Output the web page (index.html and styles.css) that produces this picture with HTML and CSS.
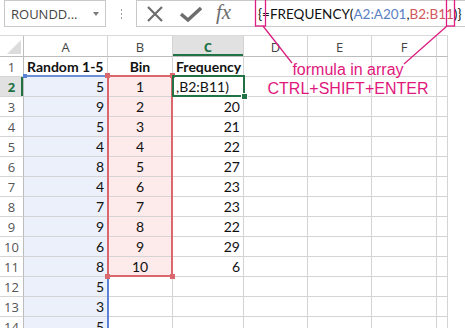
FILE: index.html
```html
<!DOCTYPE html>
<html>
<head>
<meta charset="utf-8">
<link rel="stylesheet" href="styles.css">
</head>
<body>
<div class="app">
  <div class="fbar">
    <div class="namebox"><span class="nbtext">ROUNDD...</span><span class="caret"></span></div>
    <div class="grip"><span></span><span></span><span></span></div>
    <div class="formula">
      <div class="fbtn">
        <svg width="18" height="16" viewBox="0 0 18 16"><path d="M2 1 L16 15 M16 1 L2 15" stroke="#6d6d6d" stroke-width="2.2" fill="none"/></svg>
      </div>
      <div class="fbtn">
        <svg width="22" height="16" viewBox="0 0 22 16"><path d="M1 8 L8 14 L21 2" stroke="#6d6d6d" stroke-width="3.4" fill="none"/></svg>
      </div>
      <div class="fx">fx</div>
      <div class="ftext">{=FREQUENCY(<span class="rb">A2:A201</span>,<span class="rr">B2:B11</span>)}</div>
    </div>
  </div>

  <div class="sheet">
    <div class="corner"><span class="tri"></span></div>
    <div class="ch">A</div><div class="ch">B</div><div class="ch active">C</div><div class="ch">D</div><div class="ch">E</div><div class="ch">F</div><div class="ch"></div>

    <div class="rh">1</div><div class="c b l">Random 1-5</div><div class="c b ctr">Bin</div><div class="c b l">Frequency</div><div class="c"></div><div class="c"></div><div class="c"></div><div class="c"></div>
    <div class="rh active">2</div><div class="c r fa">5</div><div class="c ctr fb">1</div><div class="c l">,B2:B11)</div><div class="c"></div><div class="c"></div><div class="c"></div><div class="c"></div>
    <div class="rh">3</div><div class="c r fa">9</div><div class="c ctr fb">2</div><div class="c r">20</div><div class="c"></div><div class="c"></div><div class="c"></div><div class="c"></div>
    <div class="rh">4</div><div class="c r fa">5</div><div class="c ctr fb">3</div><div class="c r">21</div><div class="c"></div><div class="c"></div><div class="c"></div><div class="c"></div>
    <div class="rh">5</div><div class="c r fa">4</div><div class="c ctr fb">4</div><div class="c r">22</div><div class="c"></div><div class="c"></div><div class="c"></div><div class="c"></div>
    <div class="rh">6</div><div class="c r fa">8</div><div class="c ctr fb">5</div><div class="c r">27</div><div class="c"></div><div class="c"></div><div class="c"></div><div class="c"></div>
    <div class="rh">7</div><div class="c r fa">4</div><div class="c ctr fb">6</div><div class="c r">23</div><div class="c"></div><div class="c"></div><div class="c"></div><div class="c"></div>
    <div class="rh">8</div><div class="c r fa">7</div><div class="c ctr fb">7</div><div class="c r">23</div><div class="c"></div><div class="c"></div><div class="c"></div><div class="c"></div>
    <div class="rh">9</div><div class="c r fa">9</div><div class="c ctr fb">8</div><div class="c r">22</div><div class="c"></div><div class="c"></div><div class="c"></div><div class="c"></div>
    <div class="rh">10</div><div class="c r fa">6</div><div class="c ctr fb">9</div><div class="c r">29</div><div class="c"></div><div class="c"></div><div class="c"></div><div class="c"></div>
    <div class="rh">11</div><div class="c r fa">8</div><div class="c ctr fb">10</div><div class="c r">6</div><div class="c"></div><div class="c"></div><div class="c"></div><div class="c"></div>
    <div class="rh">12</div><div class="c r fa">5</div><div class="c"></div><div class="c"></div><div class="c"></div><div class="c"></div><div class="c"></div><div class="c"></div>
    <div class="rh">13</div><div class="c r fa">3</div><div class="c"></div><div class="c"></div><div class="c"></div><div class="c"></div><div class="c"></div><div class="c"></div>
    <div class="rh">14</div><div class="c r fa">5</div><div class="c"></div><div class="c"></div><div class="c"></div><div class="c"></div><div class="c"></div><div class="c"></div>
  </div>

  <div class="sel-blue-top"></div>
  <div class="sel-blue-right"></div>
  <div class="sel-blue-dot"></div>
  <div class="sel-red"></div>
  <div class="rdot d1"></div><div class="rdot d2"></div><div class="rdot d3"></div><div class="rdot d4"></div>
  <div class="sel-active"></div>
  <div class="active-handle"></div>

  <svg class="callout" width="465" height="328" viewBox="0 0 465 328">
    <rect x="255.5" y="-1" width="10" height="27" fill="none" stroke="#dc1f80" stroke-width="1.3"/>
    <rect x="446.5" y="-1" width="8" height="27" fill="none" stroke="#dc1f80" stroke-width="1.3"/>
    <line x1="263" y1="26" x2="292" y2="63" stroke="#dc1f80" stroke-width="1.3"/>
    <line x1="447" y1="26" x2="404" y2="64" stroke="#dc1f80" stroke-width="1.3"/>
  </svg>
  <div class="note">formula in array<br>CTRL+SHIFT+ENTER</div>
</div>
</body>
</html>
```

FILE: styles.css
```css
html, body {
  margin: 0;
  padding: 0;
  background: #ffffff;
}

.app {
  position: relative;
  width: 465px;
  height: 328px;
  overflow: hidden;
  background: #ffffff;
}

/* formula bar */
.fbar {
  display: flex;
  height: 27px;
  align-items: stretch;
}

.namebox {
  flex-shrink: 0;
  margin-left: 4px;
  width: 102px;
  box-sizing: border-box;
  border: 1px solid #c9c9c9;
  display: flex;
  align-items: center;
  justify-content: space-between;
  padding: 0 6px 0 6px;
  font-family: "Open Sans", sans-serif;
  font-size: 13px;
  color: #444444;
}

.caret {
  width: 0;
  height: 0;
  border-left: 3px solid transparent;
  border-right: 3px solid transparent;
  border-top: 4px solid #7a7a7a;
}

.grip {
  flex-shrink: 0;
  width: 30px;
  display: flex;
  flex-direction: column;
  align-items: center;
  justify-content: center;
  gap: 2px;
}

.grip span {
  width: 1px;
  height: 2px;
  background: #a0a0a0;
}

.formula {
  flex: 1;
  min-width: 0;
  overflow: hidden;
  box-sizing: border-box;
  border: 1px solid #c9c9c9;
  border-right: none;
  display: flex;
  align-items: center;
  padding-left: 9px;
}

.fbtn {
  flex-shrink: 0;
  display: flex;
  align-items: center;
  margin-right: 16px;
}

.fbtn:nth-child(2) {
  margin-right: 14px;
}

.fx {
  flex-shrink: 0;
  font-family: "Liberation Serif", serif;
  font-style: italic;
  font-size: 21px;
  color: #6d6d6d;
  width: 42px;
  margin-top: -2px;
}

.ftext {
  flex-shrink: 0;
  font-family: "Lato", sans-serif;
  font-size: 13.5px;
  color: #111111;
  white-space: nowrap;
  padding-top: 1px;
}

.rb { color: #5a7fc4; }
.rr { color: #d2585c; }

/* sheet */
.sheet {
  margin-top: 8px;
  display: grid;
  grid-template-columns: 24px 84px 65px 71px 64px 64px 65px 11px;
  grid-template-rows: 21px repeat(14, 20px);
  width: 448px;
  border-top: 1px solid #dadada;
}

.corner, .ch, .rh, .c {
  box-sizing: border-box;
  border-right: 1px solid #d4d4d4;
  border-bottom: 1px solid #d4d4d4;
}

.corner {
  border-bottom-color: #bdbdbd;
  border-right-color: #bdbdbd;
  display: flex;
  align-items: flex-end;
  justify-content: flex-end;
  padding: 0 2px 2px 0;
}

.tri {
  width: 0;
  height: 0;
  border-left: 14px solid transparent;
  border-bottom: 14px solid #dcdcdc;
}

.ch {
  display: flex;
  align-items: center;
  justify-content: center;
  font-family: "Open Sans", sans-serif;
  font-size: 13px;
  color: #444444;
  border-bottom-color: #bdbdbd;
  padding-top: 1px;
}

.ch.active {
  background: #e1e1e1;
  color: #217346;
  font-weight: bold;
  box-shadow: inset 0 -2px 0 #217346;
}

.rh {
  display: flex;
  align-items: center;
  justify-content: center;
  font-family: "Open Sans", sans-serif;
  font-size: 13px;
  color: #555555;
  border-right-color: #bdbdbd;
}

.rh.active {
  background: #e1e1e1;
  color: #217346;
  font-weight: bold;
  box-shadow: inset -2px 0 0 #217346;
}

.c {
  font-family: "Lato", sans-serif;
  font-size: 14px;
  color: #111111;
  line-height: 19px;
  padding: 0 3px;
  white-space: nowrap;
  overflow: hidden;
}

.c.b { font-weight: bold; }
.c.l { text-align: left; }
.c.r { text-align: right; }
.c.ctr { text-align: center; }
.c.fa { background: #ebf0fa; }
.c.fb { background: #fdeaea; }

/* selection overlays */
.sel-blue-top {
  position: absolute;
  left: 24px;
  top: 75px;
  width: 84px;
  height: 2px;
  background: #6b8fd6;
}

.sel-blue-right {
  position: absolute;
  left: 107px;
  top: 277px;
  width: 2px;
  height: 60px;
  background: #5b82d4;
}

.sel-blue-dot {
  position: absolute;
  left: 23px;
  top: 74px;
  width: 4px;
  height: 4px;
  background: #5b82d4;
}

.sel-red {
  position: absolute;
  left: 107px;
  top: 75px;
  width: 66px;
  height: 202px;
  box-sizing: border-box;
  border: 2px solid #d9676b;
}

.rdot {
  position: absolute;
  width: 5px;
  height: 5px;
  background: #d9676b;
}

.d1 { left: 105px; top: 73px; }
.d2 { left: 170px; top: 73px; }
.d3 { left: 105px; top: 274px; }
.d4 { left: 170px; top: 274px; }

.sel-active {
  position: absolute;
  left: 172px;
  top: 75px;
  width: 73px;
  height: 22px;
  box-sizing: border-box;
  border: 2px solid #217346;
}

.active-handle {
  position: absolute;
  left: 241px;
  top: 93px;
  width: 5px;
  height: 5px;
  background: #217346;
  border: 1px solid #ffffff;
}

.callout {
  position: absolute;
  left: 0;
  top: 0;
  pointer-events: none;
}

.note {
  position: absolute;
  left: 258px;
  top: 60px;
  width: 180px;
  text-align: center;
  font-family: "Liberation Sans", Arial, sans-serif;
  font-size: 16px;
  line-height: 19px;
  color: #e0187c;
}
```
